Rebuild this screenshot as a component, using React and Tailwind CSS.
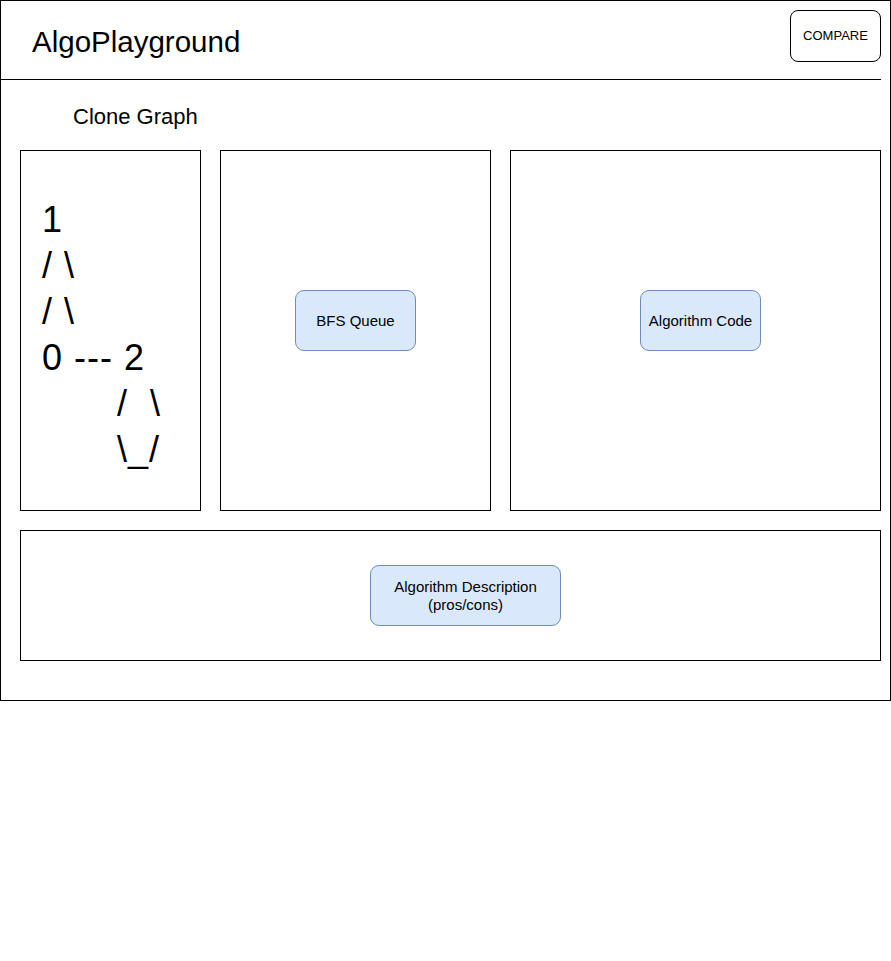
import React from 'react';

const font = { fontFamily: '"Liberation Sans", Arial, sans-serif' };

function NoteBox({ children, className = '' }) {
  return (
    <div
      className={`flex h-[61px] items-center justify-center rounded-[9px] border border-[#6c8ebf] bg-[#dae8fc] text-center text-[15px] leading-[18px] text-black ${className}`}
    >
      {children}
    </div>
  );
}

export default function App() {
  return (
    <div className="bg-white text-black" style={font}>
      <div className="flex h-[701px] w-[891px] flex-col border border-black">
        {/* header */}
        <div className="mr-[9px] flex h-[79px] items-start justify-between border-b border-black">
          <h1 className="ml-[31px] mt-[26px] text-[29.5px] leading-[30px] font-normal">AlgoPlayground</h1>
          <button className="mt-[9px] flex h-[52px] w-[91px] items-center justify-center rounded-[8px] border border-black bg-white text-[13px]">
            COMPARE
          </button>
        </div>

        <div className="h-[70px] pl-[72px] pt-[26px] text-[22px] leading-[22px]">Clone Graph</div>

        <div className="flex gap-[19px] pl-[19px]">
          <div className="h-[361px] w-[181px] border border-black pl-[21px] pt-[46px] text-[36px] leading-[46px] tracking-[1px] whitespace-pre">
            <div>1</div>
            <div>/ \</div>
            <div>/ \</div>
            <div>0 --- 2</div>
            <div className="pl-[75px]">/  \</div>
            <div className="pl-[75px]">\_/</div>
          </div>
          <div className="flex h-[361px] w-[271px] justify-center border border-black pt-[139px]">
            <NoteBox className="w-[121px]">BFS Queue</NoteBox>
          </div>
          <div className="h-[361px] w-[371px] border border-black pl-[129px] pt-[139px]">
            <NoteBox className="w-[121px]">Algorithm Code</NoteBox>
          </div>
        </div>

        <div className="ml-[19px] mt-[19px] h-[131px] w-[861px] border border-black pl-[349px] pt-[34px]">
          <NoteBox className="w-[191px]">
            Algorithm Description
            <br />
            (pros/cons)
          </NoteBox>
        </div>
      </div>
    </div>
  );
}
